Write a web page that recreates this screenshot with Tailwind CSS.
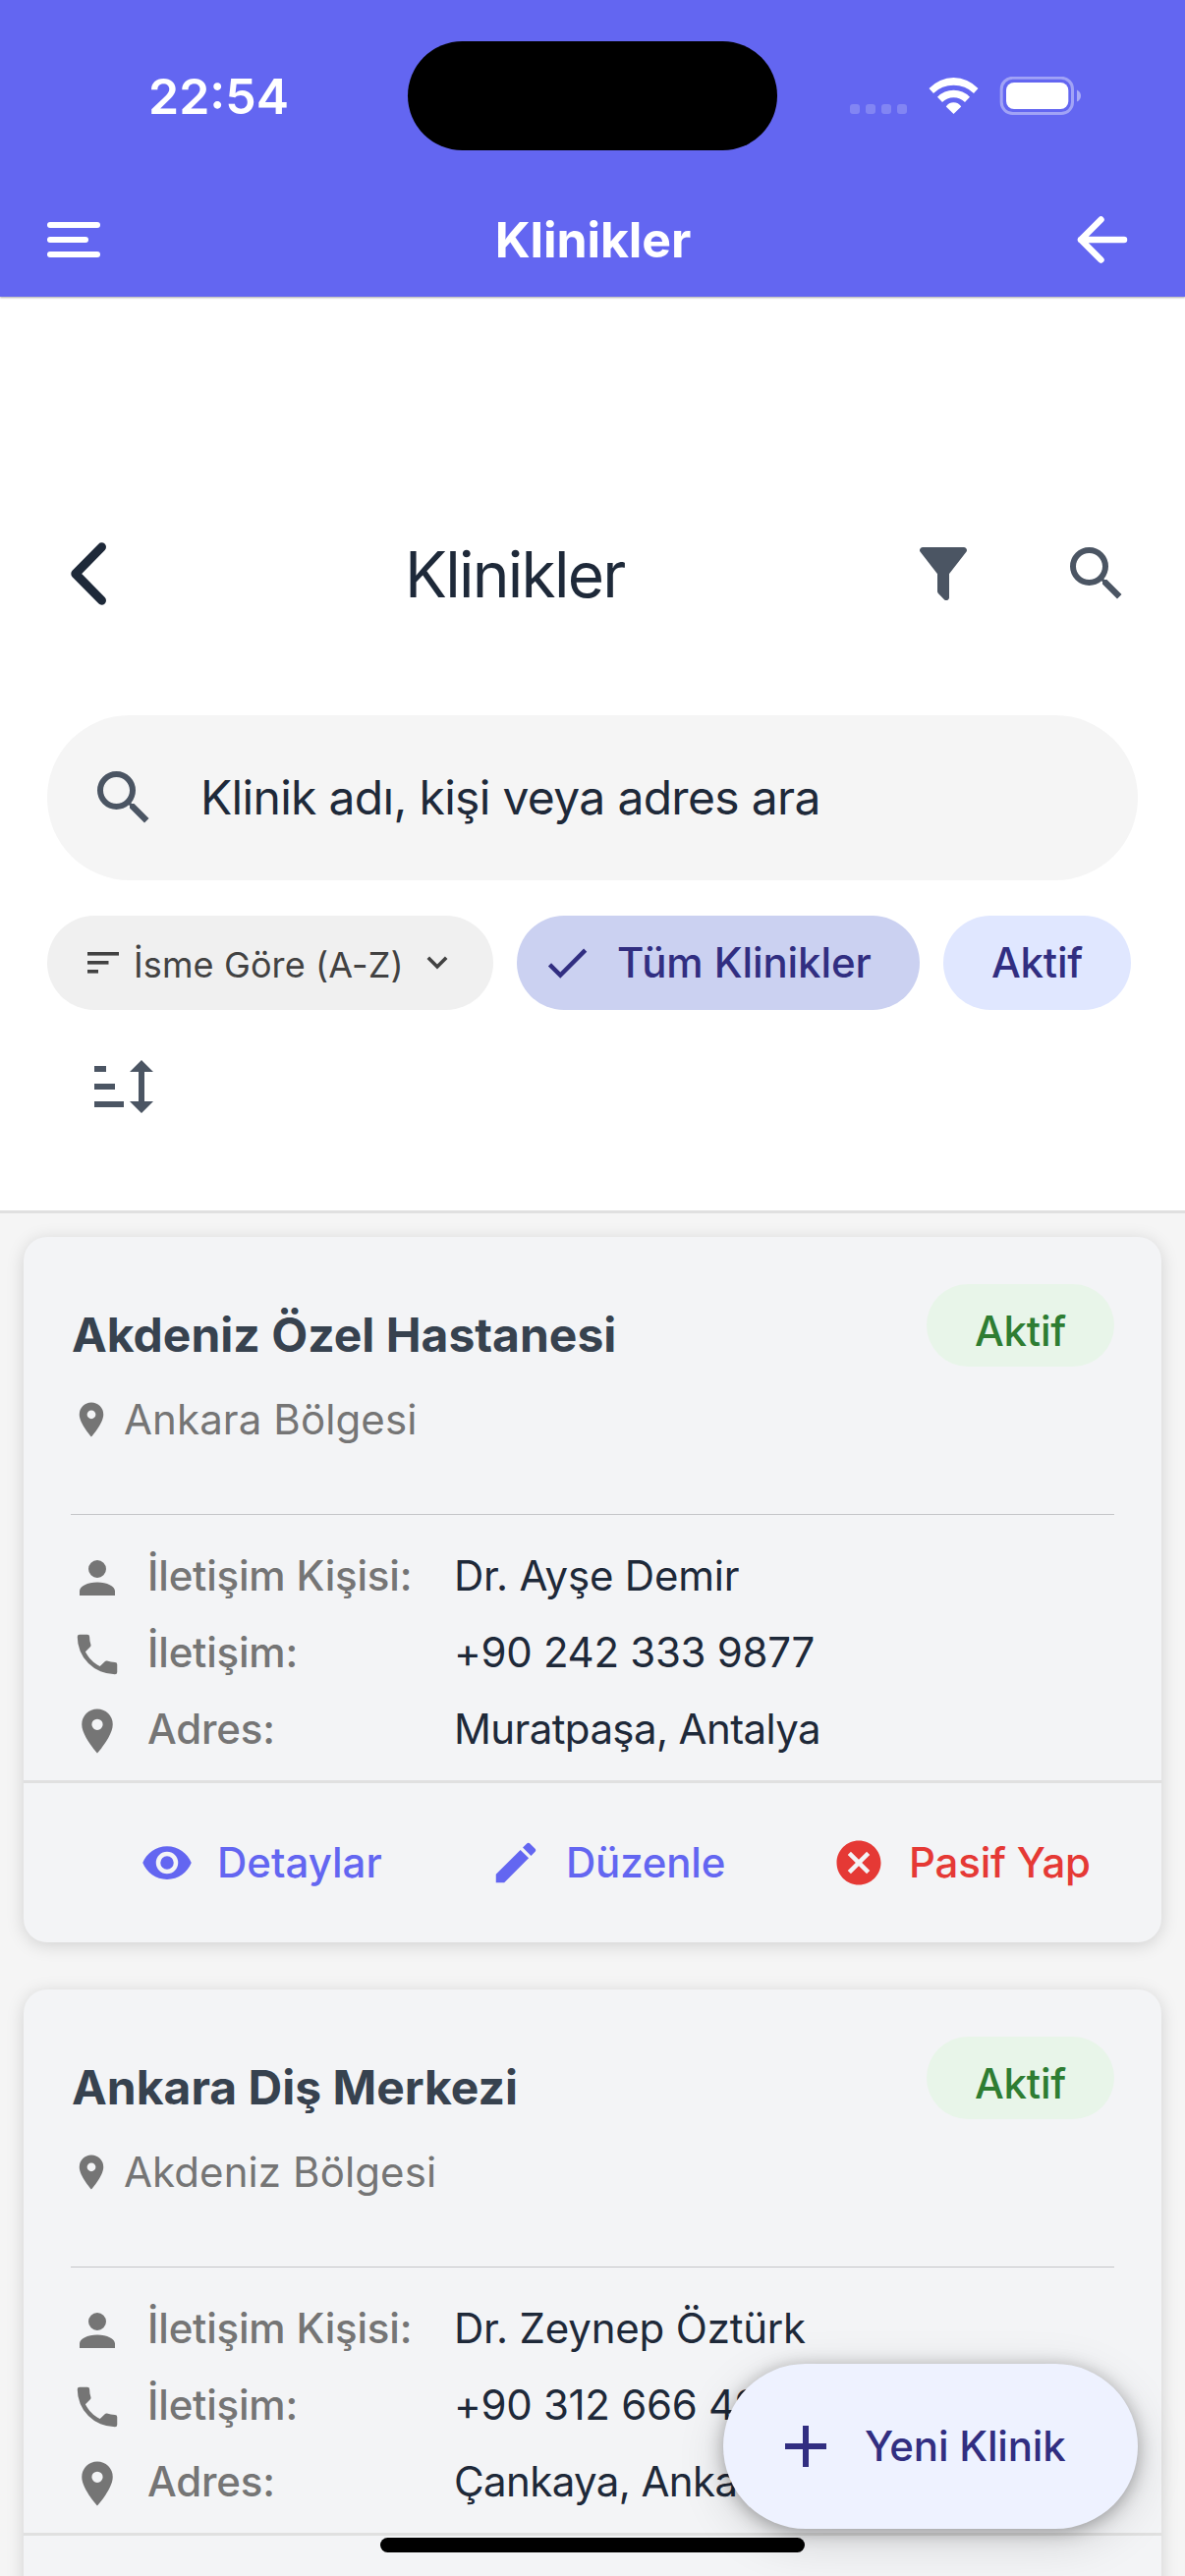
<!DOCTYPE html>
<html lang="tr">
<head>
  <meta charset="UTF-8" />
  <meta name="viewport" content="width=device-width, initial-scale=1.0" />
  <title>Klinikler</title>
  <script src="https://cdn.jsdelivr.net/npm/@tailwindcss/browser@4"></script>
</head>
<body class="relative w-[1206px] h-[2622px] overflow-hidden bg-[#f5f5f5] font-['Inter',sans-serif] text-gray-800">

  <!-- Icon sprites -->
  <svg class="hidden">
    <symbol id="i-search" viewBox="0 0 24 24"><path d="M9.5,3A6.5,6.5 0 0,1 16,9.5C16,11.11 15.41,12.59 14.44,13.73L14.71,14H15.5L20.5,19L19,20.5L14,15.5V14.71L13.73,14.44C12.59,15.41 11.11,16 9.5,16A6.5,6.5 0 0,1 3,9.5A6.5,6.5 0 0,1 9.5,3M9.5,5C7,5 5,7 5,9.5C5,12 7,14 9.5,14C12,14 14,12 14,9.5C14,7 12,5 9.5,5Z"/></symbol>
    <symbol id="i-filter" viewBox="0 0 24 24"><path d="M14,12V19.88C14.04,20.18 13.94,20.5 13.71,20.71C13.32,21.1 12.69,21.1 12.3,20.71L10.29,18.7C10.06,18.47 9.96,18.16 10,17.87V12H9.97L4.21,4.62C3.87,4.19 3.95,3.56 4.38,3.22C4.57,3.08 4.78,3 5,3V3H19V3C19.22,3 19.43,3.08 19.62,3.22C20.05,3.56 20.13,4.19 19.79,4.62L14.03,12H14Z"/></symbol>
    <symbol id="i-check" viewBox="0 0 24 24"><path d="M21,7L9,19L3.5,13.5L4.91,12.09L9,16.17L19.59,5.59L21,7Z"/></symbol>
    <symbol id="i-pin" viewBox="0 0 24 24"><path d="M12,11.5A2.5,2.5 0 0,1 9.5,9A2.5,2.5 0 0,1 12,6.5A2.5,2.5 0 0,1 14.5,9A2.5,2.5 0 0,1 12,11.5M12,2A7,7 0 0,0 5,9C5,14.25 12,22 12,22C12,22 19,14.25 19,9A7,7 0 0,0 12,2Z"/></symbol>
    <symbol id="i-account" viewBox="0 0 24 24"><path d="M12,4A4,4 0 0,1 16,8A4,4 0 0,1 12,12A4,4 0 0,1 8,8A4,4 0 0,1 12,4M12,14C16.42,14 20,15.79 20,18V20H4V18C4,15.79 7.58,14 12,14Z"/></symbol>
    <symbol id="i-phone" viewBox="0 0 24 24"><path d="M6.62,10.79C8.06,13.62 10.38,15.94 13.21,17.38L15.41,15.18C15.69,14.9 16.08,14.82 16.43,14.93C17.55,15.3 18.75,15.5 20,15.5A1,1 0 0,1 21,16.5V20A1,1 0 0,1 20,21A17,17 0 0,1 3,4A1,1 0 0,1 4,3H7.5A1,1 0 0,1 8.5,4C8.5,5.25 8.7,6.45 9.07,7.57C9.18,7.92 9.1,8.31 8.82,8.59L6.62,10.79Z"/></symbol>
    <symbol id="i-eye" viewBox="0 0 24 24"><path d="M12,9A3,3 0 0,0 9,12A3,3 0 0,0 12,15A3,3 0 0,0 15,12A3,3 0 0,0 12,9M12,17A5,5 0 0,1 7,12A5,5 0 0,1 12,7A5,5 0 0,1 17,12A5,5 0 0,1 12,17M12,4.5C7,4.5 2.73,7.61 1,12C2.73,16.39 7,19.5 12,19.5C17,19.5 21.27,16.39 23,12C21.27,7.61 17,4.5 12,4.5Z"/></symbol>
    <symbol id="i-pencil" viewBox="0 0 24 24"><path d="M20.71,7.04C21.1,6.65 21.1,6 20.71,5.63L18.37,3.29C18,2.9 17.35,2.9 16.96,3.29L15.12,5.12L18.87,8.87M3,17.25V21H6.75L17.81,9.93L14.06,6.18L3,17.25Z"/></symbol>
    <symbol id="i-close-circle" viewBox="0 0 24 24"><path d="M12,2C17.53,2 22,6.47 22,12C22,17.53 17.53,22 12,22C6.47,22 2,17.53 2,12C2,6.47 6.47,2 12,2M15.59,7L12,10.59L8.41,7L7,8.41L10.59,12L7,15.59L8.41,17L12,13.41L15.59,17L17,15.59L13.41,12L17,8.41L15.59,7Z"/></symbol>
    <symbol id="i-plus" viewBox="0 0 24 24"><path d="M19,13H13V19H11V13H5V11H11V5H13V11H19V13Z"/></symbol>
  </svg>

  <!-- Header -->
  <header class="relative z-10 h-[302px] bg-[#6366f1] text-white shadow-[0_1px_2px_rgba(0,0,0,0.35)]">
    <div class="h-[195px] flex items-center pl-[151px]">
      <span class="w-[264px] text-[50px] leading-none font-semibold">22:54</span>
      <div class="w-[376px] h-[111px] rounded-full bg-black"></div>
      <svg class="ml-[74px] mt-px" width="235" height="40" viewBox="0 0 235 40" fill="currentColor">
        <g opacity=".2">
          <rect x="0" y="28" width="10" height="10" rx="3"/>
          <rect x="16" y="28" width="10" height="10" rx="3"/>
          <rect x="32" y="28" width="10" height="10" rx="3"/>
          <rect x="48" y="28" width="10" height="10" rx="3"/>
        </g>
        <path d="M80.5 12A34 34 0 0 1 130.5 12L126 17A29.5 29.5 0 0 0 85 17Z"/>
        <path d="M89 20.7A23 23 0 0 1 122 20.7L117 26A16.4 16.4 0 0 0 94 26Z"/>
        <path d="M97.8 30.5A9 9 0 0 1 113.2 30.5L105.5 38Z"/>
        <rect x="154.2" y="1.3" width="72.3" height="36.3" rx="11.5" fill="none" stroke="currentColor" stroke-width="3" opacity=".4"/>
        <rect x="159" y="6" width="63.3" height="27" rx="8"/>
        <path d="M231 13.5Q235 15.5 235 19.5T231 25.5Z" opacity=".45"/>
      </svg>
    </div>
    <nav class="h-[98px] px-12 flex items-center justify-between">
      <svg width="62" height="36" viewBox="0 0 62 36" fill="currentColor">
        <rect y="0" width="54" height="6" rx="3"/>
        <rect y="15" width="42" height="6" rx="3"/>
        <rect y="30" width="54" height="6" rx="3"/>
      </svg>
      <h1 class="pl-px text-[50px] leading-none font-bold tracking-[-0.1px]">Klinikler</h1>
      <svg width="62" height="50" viewBox="0 0 62 50" fill="none" stroke="currentColor" stroke-width="6.5" stroke-linecap="round" stroke-linejoin="round">
        <path d="M24.5 4.5L4 25L24.5 45.5M4 25H48"/>
      </svg>
    </nav>
  </header>

  <!-- Search and filters -->
  <section class="bg-white pt-[234px] pb-[99px] border-b-3 border-[#e0e0e0]">
    <div class="h-24 pl-[72px] pr-[54px] flex items-center">
      <svg width="36" height="64" viewBox="0 0 36 64" fill="none" stroke="currentColor" stroke-width="9" stroke-linecap="round" stroke-linejoin="round">
        <path d="M31.5 4.8L4.8 32L31.5 59.2"/>
      </svg>
      <h2 class="ml-[304px] pt-0.5 text-[64px] leading-none tracking-[-1.75px]">Klinikler</h2>
      <div class="ml-auto flex gap-[84px]">
        <svg class="size-[72px] fill-[#4b5563]"><use href="#i-filter"/></svg>
        <svg class="size-[72px] fill-[#4b5563]"><use href="#i-search"/></svg>
      </div>
    </div>

    <div class="mt-24 mx-12 h-[168px] rounded-full bg-[#f5f5f5] flex items-center pl-[42px]">
      <svg class="size-[72px] fill-[#4b5563]"><use href="#i-search"/></svg>
      <span class="ml-[42px] text-[48px] leading-none tracking-[-0.68px]">Klinik adı, kişi veya adres ara</span>
    </div>

    <div class="mt-9 mx-12 flex gap-6">
      <div class="w-[454px] h-24 rounded-full bg-[#f0f0f0] flex items-center pl-[41px] text-[#424242]">
        <svg width="32" height="22" viewBox="0 0 32 22" fill="currentColor">
          <rect width="32" height="3.6"/>
          <rect y="9" width="21.5" height="3.6"/>
          <rect y="18" width="11" height="3.6"/>
        </svg>
        <span class="w-[313px] pl-[15px] pt-[3px] text-[36px] leading-none tracking-[0.12px] whitespace-nowrap">İsme Göre (A-Z)</span>
        <svg width="22" height="14" viewBox="0 0 22 14" fill="none" stroke="currentColor" stroke-width="3.6"><path d="M1.8 1.8L11 11L20.2 1.8"/></svg>
      </div>
      <div class="w-[410px] h-24 rounded-full bg-[#cbd1f1] flex items-center pl-6 text-[#312e81]">
        <svg class="size-[54px] fill-current"><use href="#i-check"/></svg>
        <span class="ml-6 text-[42px] leading-none font-medium tracking-[-0.1px]">Tüm Klinikler</span>
      </div>
      <div class="w-[191px] h-24 rounded-full bg-[#e0e7ff] flex items-center justify-center text-[#312e81]">
        <span class="text-[42px] leading-none font-medium tracking-[-0.25px]">Aktif</span>
      </div>
    </div>

    <svg class="mt-[51px] ml-24 fill-[#4b5563]" width="60" height="54" viewBox="0 0 60 54">
      <path d="M0 6H12V12H0ZM0 24H21V30H0ZM0 42H30V48H0Z"/>
      <path d="M48 0L60 12H51V42H60L48 54L36 42H45V12H36Z"/>
    </svg>
  </section>

  <!-- Clinic list -->
  <main id="clinics" class="h-[1387px] overflow-hidden p-6 flex flex-col gap-12"></main>

  <!-- Floating button -->
  <button class="absolute left-[736px] top-[2406px] w-[422px] h-[168px] rounded-full bg-[#eef2ff] text-[#312e81] flex items-center pl-12 shadow-[0_12px_48px_rgba(0,0,0,0.15),0_3px_18px_rgba(0,0,0,0.3)]">
    <svg class="size-[72px] fill-current"><use href="#i-plus"/></svg>
    <span class="ml-6 text-[42px] leading-none font-medium tracking-[-0.2px]">Yeni Klinik</span>
  </button>

  <!-- Home indicator -->
  <div class="absolute left-[387px] top-[2583px] w-[432px] h-[15px] rounded-full bg-black"></div>

  <script>
    const clinics = [
      { name: "Akdeniz Özel Hastanesi", region: "Ankara Bölgesi", contact: "Dr. Ayşe Demir", phone: "+90 242 333 9877", address: "Muratpaşa, Antalya" },
      { name: "Ankara Diş Merkezi", region: "Akdeniz Bölgesi", contact: "Dr. Zeynep Öztürk", phone: "+90 312 666 4987", address: "Çankaya, Ankara" }
    ];

    const row = (icon, label, value) => `
      <div class="h-[78px] flex items-center">
        <svg class="size-[54px] mt-1 fill-[#757575]"><use href="#${icon}"/></svg>
        <span class="w-[312px] ml-6 font-medium tracking-[-0.2px] text-[#757575]">${label}</span>
        ${value}
      </div>`;

    document.getElementById("clinics").innerHTML = clinics.map(c => `
      <article class="h-[718px] shrink-0 rounded-3xl bg-gray-100 shadow-[0_3px_18px_rgba(0,0,0,0.15)] text-[42px] leading-none">
        <div class="mx-12 h-[283px] pt-12 border-b border-[#c4c5c8] flex justify-between items-start">
          <div class="pt-4">
            <h3 class="h-[72px] pl-px flex items-center text-[48px] font-bold text-[#37424f]">${c.name}</h3>
            <p class="mt-5 h-[60px] flex items-center gap-3 tracking-[0.1px] text-[#757575]">
              <svg class="size-[42px] fill-[#757575]"><use href="#i-pin"/></svg>${c.region}
            </p>
          </div>
          <span class="w-[191px] h-[84px] pt-3 rounded-full bg-[#e8f5e9] flex items-center justify-center font-medium tracking-[-0.25px] text-[#2e7d32]">Aktif</span>
        </div>
        <div class="mx-12 pt-[23px] pb-[13px]">
          ${row("i-account", "İletişim Kişisi:", `<span class="tracking-[-0.2px]">${c.contact}</span>`)}
          ${row("i-phone", "İletişim:", `<span class="tracking-[-0.3px]">${c.phone}</span>`)}
          ${row("i-pin", "Adres:", `<span class="tracking-[-0.61px]">${c.address}</span>`)}
        </div>
        <div class="h-[165px] border-t-3 border-[#e0e0e0] pl-[119px] flex items-center font-medium text-[#6366f1]">
          <div class="w-[355px] flex items-center gap-6"><svg class="size-[54px] fill-current"><use href="#i-eye"/></svg>Detaylar</div>
          <div class="w-[349px] flex items-center gap-6 tracking-[-0.2px]"><svg class="size-[54px] fill-current"><use href="#i-pencil"/></svg>Düzenle</div>
          <div class="flex items-center gap-6 tracking-[-0.2px] text-[#e53935]"><svg class="size-[54px] fill-current"><use href="#i-close-circle"/></svg>Pasif Yap</div>
        </div>
      </article>`).join("");
  </script>
</body>
</html>
